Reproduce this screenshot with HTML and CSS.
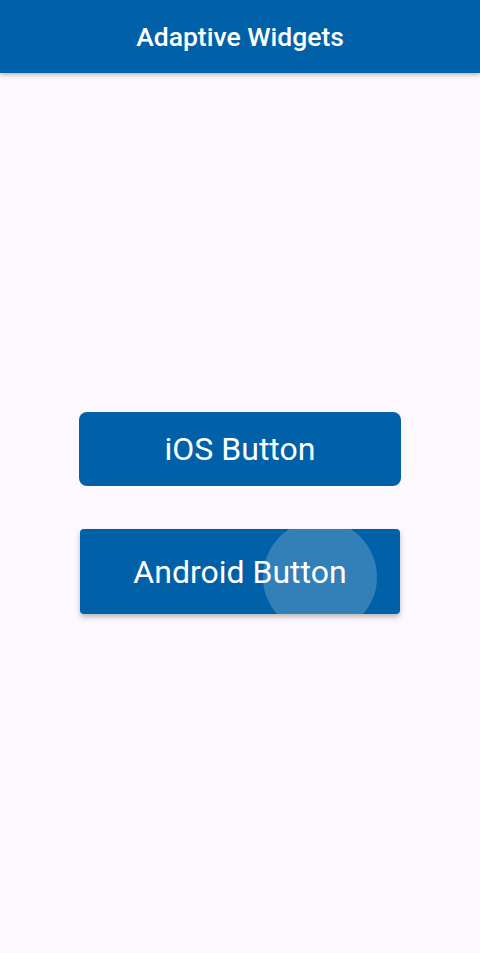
FILE: index.html
```html
<!DOCTYPE html>
<html>
<head>
<meta charset="utf-8">
<link rel="stylesheet" href="styles.css">
</head>
<body>
<header class="appbar"><h1 class="title">Adaptive Widgets</h1></header>
<main class="content">
  <button class="btn btn-ios">iOS Button</button>
  <button class="btn btn-android">Android Button<span class="ripple"></span></button>
</main>
</body>
</html>
```

FILE: styles.css
```css
* { box-sizing: border-box; }
html, body { margin: 0; padding: 0; }
body {
  width: 480px;
  height: 953px;
  background: #fcf8fd;
  font-family: Roboto, "Noto Sans", sans-serif;
  display: flex;
  flex-direction: column;
  overflow: hidden;
}
.appbar {
  height: 73px;
  background: #0061a8;
  display: flex;
  align-items: center;
  justify-content: center;
  box-shadow: 0 2px 4px rgba(0,0,0,0.25);
  position: relative;
  z-index: 1;
}
.title {
  margin: 0;
  color: #fff;
  font-size: 26.5px;
  font-weight: 500;
}
.content {
  flex: 1;
  display: flex;
  flex-direction: column;
  align-items: center;
  padding-top: 339px;
}
.btn {
  border: none;
  background: #0061a8;
  color: #fff;
  font-family: Roboto, "Noto Sans", sans-serif;
  font-size: 32px;
  font-weight: 400;
  padding: 0;
}
.btn-ios {
  width: 322px;
  height: 74px;
  border-radius: 8px;
}
.btn-android {
  margin-top: 43px;
  width: 320px;
  height: 85px;
  border-radius: 4px;
  box-shadow: 0 3px 5px rgba(0,0,0,0.25);
  position: relative;
  overflow: hidden;
}
.ripple {
  position: absolute;
  left: 183px;
  top: -9px;
  width: 114px;
  height: 114px;
  border-radius: 50%;
  background: rgba(255,255,255,0.2);
}
```
